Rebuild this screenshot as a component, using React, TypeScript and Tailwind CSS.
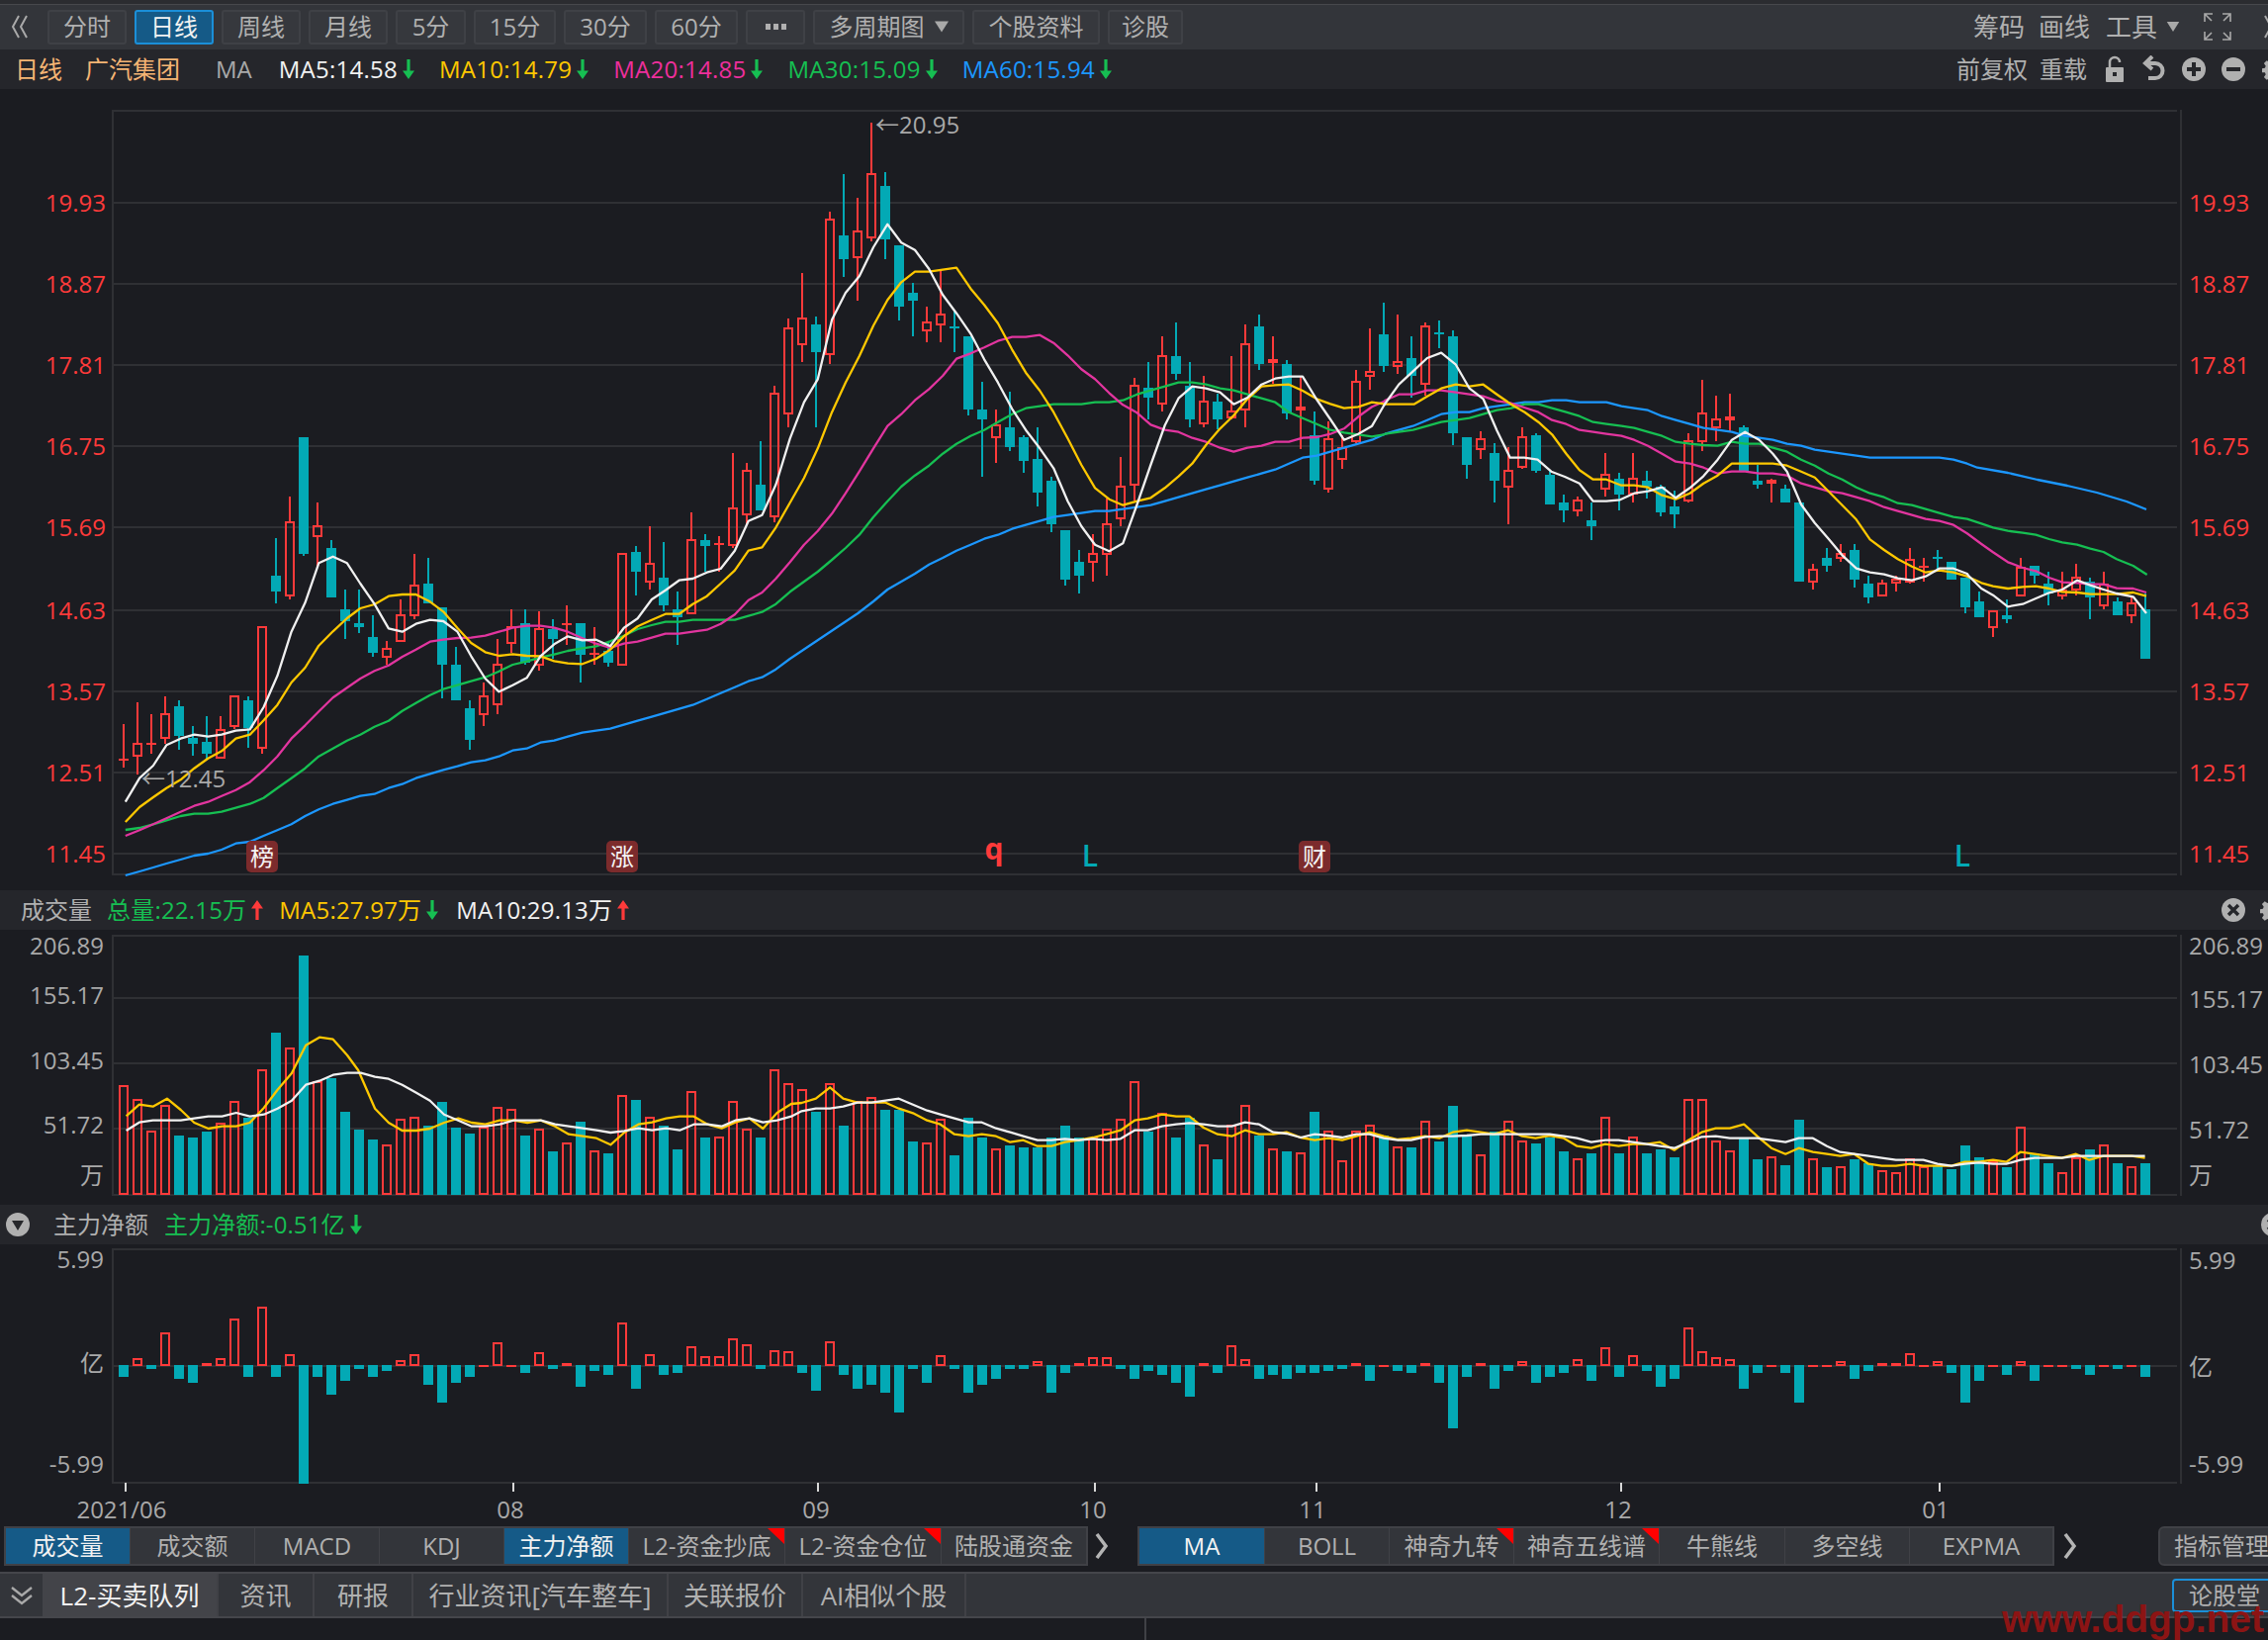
import React from "react";

type Pt = [number, number];
type Row = [number, number, number, number, number];

const RED = "#ff3a3a";
const TEAL = "#03a9b5";
const GRID = "#2f3034";
const xOf = (i: number) => 125 + 14 * i;

// readings taken from crops of the picture, mapped back by each crop's origin and scale
const conv = (ox: number, oy: number, sx: number, sy: number, pts: number[][]): Pt[] =>
  pts.map(([x, y]) => [ox + x / sx, oy + y / sy]);
const join = (...parts: Pt[][]): Pt[] => {
  const out: Pt[] = [];
  parts.forEach((part) =>
    part.forEach((p) => {
      if (!out.length || p[0] > out[out.length - 1][0]) out.push(p);
    })
  );
  return out;
};
const A = (p: number[][]) => conv(100, 400, 2.24, 3, p);
const B = (p: number[][]) => conv(700, 100, 2.24, 3, p);
const C = (p: number[][]) => conv(1300, 280, 2.24, 3, p);
const D = (p: number[][]) => conv(1960, 520, 3, 3, p);
const toPath = (pts: Pt[]) => pts.map((p) => p[0].toFixed(1) + "," + p[1].toFixed(1)).join(" ");

const candlesA: Row[] = [
  [1,996,1102,1105,1128],[1,930,1052,1096,1150],[1,966,1054,1057,1085],[1,912,962,1042,1055],[0,924,942,1032,1074],
  [0,1002,1038,1056,1092],[0,972,1050,1086,1105],[1,972,1010,1102,1102],[1,908,908,1006,1010],[0,912,924,1008,1068],
  [1,698,698,1072,1085],[0,432,546,594,630],[1,306,380,610,618],[0,126,126,480,486],[1,324,392,430,520],
  [0,438,462,612,612],[0,588,648,684,738],[0,588,690,702,720],[0,666,732,780,792],[1,744,764,796,816],
  [1,618,662,748,748],[1,480,572,670,678],[0,492,570,630,630],[0,642,642,816,918],[0,762,816,924,924],
  [0,924,948,1044,1074],[1,870,908,970,1002],[1,738,812,940,966],[1,648,700,754,780],[0,648,690,810,816],
  [1,654,704,820,834],[0,678,708,738,798],[1,636,689,692,756],[0,690,690,786,870],[1,702,779,782,816],
  [0,750,774,810,822],[1,476,476,820,820],[0,456,474,534,606],[1,396,506,568,588],[0,444,552,636,654],
  [0,594,648,672,756],[1,354,434,664,664],[0,420,438,456,534],[1,426,448,452,534],[1,174,338,456,462],
  [1,204,224,364,390],[0,138,270,348,348],
];
const candlesB: Row[] = [
  [1,870,890,1270,1284],[1,666,692,958,996],[1,528,662,748,798],[0,660,684,768,996],[1,342,362,778,804],
  [0,228,414,486,540],[1,300,398,484,612],[1,72,224,424,432],[0,222,264,426,486],[0,444,444,630,672],
  [0,558,588,612,720],[1,630,674,706,738],[1,522,650,688,738],[0,642,689,692,768],[0,720,720,942,960],
  [0,858,942,972,1146],[1,942,986,1030,1104],[0,888,996,1056,1068],[0,1020,1026,1098,1134],[0,996,1092,1194,1236],
  [0,1146,1158,1290,1314],[0,1308,1308,1458,1476],[0,1368,1404,1446,1500],[1,1320,1376,1408,1464],[1,1212,1286,1384,1446],
  [1,1086,1172,1276,1296],[1,846,866,1174,1218],[0,798,876,906,972],[1,720,776,928,948],[0,678,780,834,852],
  [0,798,870,972,996],[1,840,914,988,996],[0,894,918,972,1002],[1,780,944,970,972],[1,684,740,946,996],
  [0,654,690,804,822],[1,720,788,802,864],[0,792,804,954,972],[1,840,932,946,1062],[0,948,1020,1158,1170],
  [1,978,1030,1186,1194],[1,1020,1056,1096,1122],[1,822,854,1042,1044],[1,696,824,844,882],[0,618,714,810,828],
];
const candlesC: Row[] = [
  [1,114,254,274,294],[0,180,246,300,366],[1,138,146,328,360],[0,132,169,172,216],[0,162,180,474,510],
  [0,486,486,570,612],[1,468,488,526,552],[0,504,534,618,684],[1,516,584,640,750],[1,456,482,580,582],
  [0,474,480,588,594],[0,588,600,690,690],[0,660,684,708,744],[1,666,676,712,726],[0,684,738,756,798],
  [1,534,596,646,666],[0,594,612,660,708],[1,534,608,660,684],[0,588,618,636,672],[0,630,636,714,726],
  [0,648,696,720,762],[1,474,494,682,684],[1,312,410,502,528],[1,360,428,460,498],[1,354,422,436,470],
  [0,450,456,588,588],[0,570,618,630,642],[1,612,614,628,684],[0,630,642,684,684],[0,684,684,924,924],
  [1,870,884,928,948],[0,822,852,876,894],[1,810,836,856,864],[0,810,828,918,942],[0,906,930,972,990],
  [1,918,926,970,970],[1,906,916,930,954],[1,822,854,928,930],[1,852,876,880,924],[0,828,850,854,888],
  [0,864,864,918,918],
];
const candlesD: Row[] = [
  [0,192,192,282,300],[0,234,264,312,312],[1,290,290,346,372],[0,258,306,318,330],[1,132,158,250,250],
  [0,156,156,186,210],[0,174,210,240,276],[1,174,228,250,258],[1,150,188,232,246],[0,192,204,252,318],
  [1,174,210,280,288],[0,252,264,306,306],[1,252,266,310,330],[0,240,288,438,438],
];
const toY = (rows: Row[], base: number): Row[] =>
  rows.map(([u, h, t, b, l]) => [u, base + h / 3, base + t / 3, base + b / 3, base + l / 3]);
const candles: Row[] = [
  ...toY(candlesA, 400),
  ...toY(candlesB, 100),
  ...toY(candlesC, 280),
  ...toY(candlesD, 520),
];

const ma5 = join(
  A([[60,1232],[92,1160],[123,1122],[153,1060],[185,1040],[216,1028],[247,1034],[278,1028],[310,1016],[342,1012],[373,945],[404,850],[436,716],[467,628],[498,508],[530,488],[562,508],[592,570],[624,632],[656,706],[687,716],[718,692],[750,680],[780,684],[812,716],[843,790],[875,858],[906,898],[937,878],[969,856],[1000,790],[1031,754],[1062,730],[1095,742],[1126,740],[1158,760],[1189,704],[1220,676],[1252,618],[1283,590],[1314,560],[1345,555],[1377,536],[1408,525],[1440,470],[1471,380],[1502,362],[1533,270],[1565,130]]),
  B([[190,1150],[221,1030],[253,920],[284,850],[316,670],[347,588],[378,538],[410,450],[442,380],[473,436],[504,458],[536,516],[567,594],[598,650],[630,712],[661,790],[692,860],[724,940],[755,1004],[787,1060],[818,1120],[850,1220],[881,1296],[912,1352],[944,1372],[975,1348],[1007,1230],[1038,1110],[1070,990],[1101,908],[1132,872],[1163,878],[1195,890],[1226,926],[1257,906],[1289,866],[1320,848],[1351,842],[1382,842],[1414,912],[1445,972],[1476,1034],[1508,1016],[1539,992],[1566,930]]),
  C([[225,384],[256,326],[288,286],[320,246],[352,230],[385,266],[416,338],[447,370],[478,466],[508,548],[540,548],[570,554],[601,590],[632,606],[665,626],[696,680],[726,680],[757,676],[789,656],[820,650],[852,638],[883,670],[915,640],[946,604],[978,554],[1010,494],[1040,470],[1072,494],[1103,536],[1135,590],[1167,690],[1198,746],[1229,794],[1260,844],[1292,884],[1323,896],[1355,902],[1386,914],[1418,920],[1449,908],[1480,884],[1512,884],[1543,900]]),
  D([[90,185],[130,225],[165,245],[210,280],[255,272],[295,255],[335,238],[375,228],[420,200],[460,215],[500,228],[540,240],[590,250],[630,300]])
);
const ma10 = join(
  A([[60,1293],[92,1248],[123,1218],[153,1190],[185,1165],[216,1130],[247,1100],[278,1078],[310,1040],[342,1028],[373,985],[404,938],[436,870],[467,825],[498,758],[530,715],[562,675],[592,645],[624,633],[656,608],[687,603],[718,603],[750,625],[780,655],[812,705],[843,750],[875,778],[906,789],[937,784],[969,789],[1000,790],[1031,805],[1062,812],[1095,814],[1126,798],[1158,770],[1189,730],[1220,700],[1252,680],[1283,662],[1314,662],[1345,632],[1377,608],[1408,570],[1440,530],[1471,470],[1502,460],[1533,400],[1565,325]]),
  B([[190,1300],[221,1230],[253,1150],[284,1060],[316,950],[347,860],[378,780],[410,688],[442,610],[473,556],[504,524],[536,524],[567,518],[598,512],[630,575],[661,625],[692,680],[724,760],[755,830],[787,885],[818,950],[850,1030],[881,1110],[912,1180],[944,1214],[975,1232],[1007,1220],[1038,1210],[1070,1180],[1101,1145],[1132,1106],[1163,1050],[1195,1000],[1226,960],[1257,910],[1289,872],[1320,868],[1351,866],[1382,885],[1414,910],[1445,925],[1476,938],[1508,934],[1539,920],[1566,925]]),
  C([[225,386],[256,386],[290,386],[320,362],[352,338],[385,326],[416,332],[447,326],[478,356],[510,386],[541,410],[572,440],[603,478],[635,536],[665,586],[696,614],[726,614],[760,632],[789,632],[820,638],[852,662],[883,674],[915,656],[946,626],[978,602],[1010,566],[1040,566],[1072,566],[1103,566],[1135,572],[1167,590],[1198,608],[1229,650],[1260,692],[1292,736],[1323,796],[1355,828],[1386,856],[1418,878],[1449,896],[1480,890],[1512,896],[1543,908]]),
  D([[90,190],[130,208],[165,218],[210,225],[255,220],[295,218],[335,225],[375,235],[420,237],[460,242],[500,242],[540,242],[590,237],[630,248]])
);
const ma20 = join(
  A([[60,1335],[92,1318],[123,1300],[153,1282],[185,1262],[216,1244],[247,1232],[278,1214],[310,1196],[342,1172],[373,1136],[404,1094],[436,1040],[467,1000],[498,958],[530,916],[562,886],[592,858],[624,835],[656,818],[687,792],[718,770],[750,746],[780,740],[812,735],[843,734],[875,728],[906,716],[937,704],[969,698],[1000,698],[1031,704],[1062,716],[1095,736],[1126,752],[1158,765],[1189,752],[1220,746],[1252,734],[1283,722],[1314,722],[1345,716],[1377,710],[1408,692],[1440,664],[1471,620],[1502,597],[1533,555],[1565,505]]),
  B([[221,1412],[253,1352],[284,1310],[316,1258],[347,1196],[378,1130],[410,1060],[442,992],[473,956],[504,914],[536,880],[567,840],[598,788],[630,772],[661,754],[692,734],[724,722],[755,722],[787,716],[818,740],[850,778],[881,820],[912,850],[944,892],[975,928],[1007,952],[1038,988],[1070,1004],[1101,1010],[1132,1028],[1163,1040],[1195,1058],[1226,1070],[1257,1058],[1289,1052],[1320,1040],[1351,1040],[1382,1028],[1414,1026],[1445,1016],[1476,1000],[1508,964],[1539,934],[1566,918]]),
  C([[225,374],[256,356],[288,356],[320,344],[352,344],[385,350],[416,356],[447,362],[478,376],[508,382],[540,396],[572,410],[603,434],[635,446],[665,464],[696,470],[726,476],[760,482],[789,494],[820,512],[852,536],[883,560],[915,566],[946,578],[978,596],[1010,590],[1040,590],[1072,596],[1103,596],[1135,602],[1167,626],[1198,638],[1229,650],[1260,656],[1292,668],[1323,680],[1355,698],[1386,710],[1418,722],[1449,734],[1480,740],[1512,752],[1543,778]]),
  D([[130,90],[165,115],[210,145],[255,162],[295,172],[335,192],[375,206],[420,208],[460,212],[500,212],[540,224],[590,225],[630,237]])
);
const ma30 = join(
  A([[60,1317],[92,1311],[123,1300],[153,1288],[185,1275],[216,1268],[247,1268],[278,1262],[310,1250],[342,1238],[373,1220],[404,1190],[436,1160],[467,1130],[498,1094],[530,1070],[562,1046],[592,1028],[624,1004],[656,986],[687,956],[718,932],[750,908],[780,890],[812,878],[843,866],[875,854],[906,836],[937,816],[969,806],[1000,794],[1031,785],[1062,774],[1095,766],[1126,760],[1158,745],[1189,728],[1220,708],[1252,696],[1283,686],[1314,686],[1345,680],[1377,680],[1408,680],[1440,680],[1471,668],[1502,656],[1533,632],[1565,595]]),
  B([[253,1464],[284,1434],[316,1398],[347,1362],[378,1322],[410,1268],[442,1220],[473,1176],[504,1142],[536,1112],[567,1076],[598,1046],[630,1022],[661,1004],[692,980],[724,956],[755,938],[787,932],[818,926],[850,926],[881,926],[912,920],[944,920],[975,914],[1007,896],[1038,884],[1070,872],[1101,860],[1132,860],[1163,866],[1195,878],[1226,884],[1257,896],[1289,908],[1320,920],[1351,950],[1382,968],[1414,986],[1445,1004],[1476,1012],[1508,1018],[1539,1024],[1566,1018]]),
  C([[225,476],[256,470],[288,464],[320,452],[352,440],[385,434],[416,428],[447,416],[478,404],[510,398],[541,386],[572,386],[603,398],[635,410],[665,422],[696,440],[726,446],[760,452],[789,458],[820,470],[852,482],[883,500],[915,506],[946,510],[978,512],[1010,500],[1040,506],[1072,506],[1103,518],[1135,530],[1167,554],[1198,572],[1229,596],[1260,614],[1292,638],[1323,656],[1355,668],[1386,686],[1418,692],[1449,704],[1480,716],[1512,728],[1543,734]]),
  D([[130,28],[165,40],[210,50],[255,56],[295,62],[335,75],[375,85],[420,92],[460,104],[500,114],[540,136],[590,156],[632,183]])
);
const ma60 = join(
  A([[60,1455],[92,1443],[123,1431],[153,1419],[185,1407],[216,1395],[247,1389],[278,1377],[310,1358],[342,1353],[373,1335],[404,1318],[436,1300],[467,1275],[498,1255],[530,1238],[562,1226],[592,1214],[624,1208],[656,1190],[687,1178],[718,1160],[750,1147],[780,1135],[812,1124],[843,1112],[875,1106],[906,1094],[937,1076],[969,1070],[1000,1052],[1031,1046],[1062,1034],[1095,1022],[1126,1016],[1158,1010],[1189,998],[1220,986],[1252,974],[1283,962],[1314,950],[1345,938],[1377,920],[1408,902],[1440,884],[1471,866],[1502,854],[1533,830],[1565,798]]),
  B([[375,1560],[410,1524],[442,1488],[473,1464],[504,1440],[536,1412],[567,1392],[598,1370],[630,1352],[661,1334],[692,1322],[724,1304],[755,1292],[787,1280],[818,1268],[850,1262],[881,1256],[912,1250],[944,1250],[975,1244],[1007,1238],[1038,1232],[1070,1220],[1101,1208],[1132,1196],[1163,1184],[1195,1172],[1226,1160],[1257,1148],[1289,1136],[1320,1124],[1351,1106],[1382,1088],[1414,1082],[1445,1070],[1476,1058],[1508,1046],[1539,1034],[1566,1018]]),
  C([[225,476],[256,464],[288,452],[320,434],[352,416],[385,410],[416,410],[447,398],[478,392],[510,386],[541,380],[572,380],[603,374],[635,374],[665,380],[696,380],[726,380],[760,392],[789,398],[820,404],[852,422],[883,434],[915,446],[946,458],[978,464],[1010,470],[1040,482],[1072,488],[1103,494],[1135,506],[1167,512],[1198,524],[1229,530],[1260,536],[1292,542],[1323,548],[1355,548],[1386,548],[1418,548],[1449,548],[1480,548],[1512,554],[1543,566],[1566,578]]),
  [[2030,478],[2060,485],[2090,491],[2120,498],[2150,507],[2170,515]]
);

// signed bar tops: positive is a red bar, negative a teal one
const volA = [650,692,788,710,-804,-810,-792,764,698,-750,602,-492,536,-258,638,-630,-732,-786,-816,830,752,746,-774,-702,-780,-798,776,716,722,-804,782,-852,824,-762,848,-858,680,-696,746,-774,-846,668,-810,806,698,782,-810,602];
const volB = [104,122,-192,104,-234,158,146,-186,-186,-282,284,212,-324,-210,-270,302,-294,-300,-300,-270,-234,-270,270,242,212,98,-252,194,-270,-210,290,-336,230,170,-264,302,-312,314,-192,248,338,248,230,-264,296,-300,218,-282,-174,-264,320,-252,218,278,-288,-270,-312,332,-318,206,-318,266,-318,-306,-330,152,152,278,308,-270,-336,326,-354,-216,332,-360,356,-336,-348,368,374,332,356,-354,-366,-294,-330,342,-360,236,-318,-348,374,330,-306,290,-348,356,-348];
const volBars = [...volA.map((v) => Math.sign(v) * (880 + Math.abs(v) / 3)), ...volB.map((v) => Math.sign(v) * (1060 + Math.abs(v) / 3))];

const E = (p: number[][]) => conv(0, 880, 1.96, 3, p);
const F = (p: number[][]) => conv(790, 1060, 1.12, 3, p);
const volMa5 = join(
  E([[250,745],[276,710],[303,716],[331,692],[358,726],[385,765],[413,783],[440,776],[468,776],[495,765],[523,720],[550,665],[578,615],[606,530],[633,506],[660,512],[688,560],[710,606],[743,722],[770,765],[797,789],[825,789],[852,783],[880,765],[908,752],[935,765],[962,770],[990,758],[1018,758],[1045,765],[1072,758],[1100,776],[1127,800],[1155,806],[1182,812],[1210,832],[1237,795],[1265,770],[1292,764],[1320,752],[1347,746],[1375,746],[1402,770],[1430,782],[1457,764],[1485,752],[1512,783],[1540,735],[1568,708]]),
  F([[23,165],[39,152],[55,118],[70,152],[86,164],[102,164],[118,164],[133,182],[149,196],[165,218],[180,230],[196,260],[212,266],[227,260],[243,266],[259,284],[274,278],[290,296],[306,296],[321,284],[337,278],[353,270],[368,260],[384,248],[400,218],[415,212],[431,200],[447,206],[462,206],[478,240],[494,260],[510,266],[525,248],[541,260],[557,260],[572,254],[588,270],[604,278],[619,272],[635,278],[651,266],[666,254],[682,266],[698,276],[713,272],[729,266],[745,272],[760,254],[776,248],[792,254],[807,260],[823,248],[839,266],[854,272],[870,264],[886,272],[901,296],[917,302],[933,290],[948,296],[964,290],[980,290],[995,284],[1011,308],[1027,278],[1042,254],[1058,242],[1074,242],[1090,230],[1105,266],[1121,302],[1137,320],[1152,302],[1168,314],[1184,320],[1199,326],[1215,320],[1231,350],[1246,356],[1262,356],[1278,350],[1293,356],[1309,356],[1325,356],[1340,344],[1356,344],[1372,338],[1387,344],[1403,314],[1419,320],[1434,326],[1450,332],[1466,320],[1481,338],[1497,326],[1513,326],[1529,326],[1544,332]])
);
const volMa10 = join(
  E([[250,789],[276,764],[303,758],[331,758],[358,758],[385,752],[413,746],[440,746],[468,735],[495,746],[523,740],[550,722],[578,698],[606,650],[633,638],[660,620],[688,614],[715,614],[743,626],[770,632],[797,650],[825,674],[852,698],[880,740],[908,758],[935,776],[962,776],[990,770],[1018,758],[1045,758],[1072,758],[1100,770],[1127,776],[1155,782],[1182,788],[1210,795],[1237,790],[1265,782],[1292,788],[1320,782],[1347,788],[1375,770],[1402,770],[1430,776],[1457,758],[1485,752],[1512,764],[1540,758],[1568,746]]),
  F([[23,190],[39,182],[55,182],[70,176],[86,164],[102,164],[118,158],[133,152],[149,170],[165,188],[180,200],[196,212],[212,224],[227,224],[243,242],[259,254],[274,266],[290,278],[306,278],[321,274],[337,278],[353,274],[368,278],[384,274],[400,248],[415,248],[431,236],[447,230],[462,226],[478,230],[494,236],[510,236],[525,224],[541,230],[557,254],[572,258],[588,270],[604,260],[619,264],[635,270],[651,260],[666,260],[682,272],[698,278],[713,278],[729,268],[745,266],[760,266],[776,264],[792,260],[807,260],[823,260],[839,260],[854,260],[870,260],[886,266],[901,272],[917,284],[933,278],[948,278],[964,284],[980,290],[995,296],[1011,302],[1027,284],[1042,268],[1058,266],[1074,272],[1090,272],[1105,272],[1121,278],[1137,284],[1152,272],[1168,272],[1184,296],[1199,314],[1215,320],[1231,326],[1246,332],[1262,338],[1278,338],[1293,338],[1309,350],[1325,356],[1340,350],[1356,346],[1372,350],[1387,350],[1403,338],[1419,332],[1434,332],[1450,332],[1466,326],[1481,326],[1497,326],[1513,326],[1529,326],[1544,326]])
);

const netA = [-516,458,-492,380,-522,-534,474,458,338,-516,302,-516,446,-840,-516,-570,-528,-492,-516,-498,464,446,-540,-594,-534,-516,481,410,481,-504,440,-492,474,-546,-498,-510,350,-552,446,-510,-504,422,452,452,398,416,-492,434];
const netB = [918,-984,-1038,888,-990,-1032,-1020,-1044,-1104,-972,-1014,930,-972,-1044,-1020,-1002,-972,-972,948,-1044,-984,954,936,936,-972,-1002,-978,-990,-1014,-1056,954,-984,900,942,-1002,-990,-1002,-984,-984,-978,-972,954,-1008,960,-978,-984,954,-1014,-1152,-996,954,-1032,-978,948,-1014,-996,-984,942,-1008,906,-996,930,-978,-1026,-1002,846,918,936,942,-1032,-984,960,-984,-1074,960,960,948,-1002,-978,954,954,924,960,948,-984,-1074,-1008,960,-990,948,-1008,960,960,-972,-990,960,-972,960,-996];
const netBars = [...netA.map((v) => Math.sign(v) * (1220 + Math.abs(v) / 3)), ...netB.map((v) => Math.sign(v) * (1060 + Math.abs(v) / 3))];

const Hollow = ({ x, top, bottom }: { x: number; top: number; bottom: number }) =>
  bottom - top <= 3 ? (
    <rect x={x - 5} y={top} width={10} height={Math.max(bottom - top, 2)} fill={RED} />
  ) : (
    <rect x={x - 4} y={top + 1} width={8} height={bottom - top - 2} fill="none" stroke={RED} strokeWidth={2} />
  );

const Candle = ({ i, row }: { i: number; row: Row }) => {
  const [up, h, t, b, l] = row;
  const x = xOf(i);
  if (up) {
    return (
      <g>
        <rect x={x - 1} y={h} width={2} height={Math.max(t - h, 0)} fill={RED} />
        <rect x={x - 1} y={b} width={2} height={Math.max(l - b, 0)} fill={RED} />
        <Hollow x={x} top={t} bottom={b} />
      </g>
    );
  }
  return (
    <g>
      <rect x={x - 1} y={h} width={2} height={l - h} fill={TEAL} />
      <rect x={x - 5} y={t} width={10} height={Math.max(b - t, 2)} fill={TEAL} />
    </g>
  );
};

const Line = ({ pts, color, w = 2.3 }: { pts: Pt[]; color: string; w?: number }) => (
  <polyline points={toPath(pts)} fill="none" stroke={color} strokeWidth={w} strokeLinejoin="round" />
);

const HLine = ({ y, x2 = 2201 }: { y: number; x2?: number }) => <rect x={113} y={y - 1} width={x2 - 113} height={2} fill={GRID} />;
const VLine = ({ x, y1, y2 }: { x: number; y1: number; y2: number }) => <rect x={x - 1} y={y1} width={2} height={y2 - y1} fill={GRID} />;

const Marker = ({ x, label }: { x: number; label: string }) => (
  <g>
    <rect x={x - 16} y={850} width={32} height={32} rx={5} fill="#7c2b2c" />
    <text x={x} y={865} textAnchor="middle" dominantBaseline="central" fontSize={24} fill="#f5f5f5">
      {label}
    </text>
  </g>
);

const priceTicks: [string, number][] = [["19.93",205],["18.87",287],["17.81",369],["16.75",451],["15.69",533],["14.63",617],["13.57",699],["12.51",781],["11.45",863]];

const PriceChart = () => (
  <svg viewBox="0 90 2293 810" className="block w-[2293px] h-[810px]">
    <g shapeRendering="crispEdges">
      <HLine y={112} />
      {priceTicks.map(([, y]) => <HLine key={y} y={y} />)}
      <HLine y={884} />
      <VLine x={114} y1={111} y2={885} />
      <VLine x={2205} y1={111} y2={885} />
      {candles.map((row, i) => <Candle key={i} i={i} row={row} />)}
    </g>
    <Line pts={ma60} color="#1c97ff" />
    <Line pts={ma30} color="#16bf52" />
    <Line pts={ma20} color="#e2359f" />
    <Line pts={ma10} color="#ffc800" />
    <Line pts={ma5} color="#f0f0f0" />
    {priceTicks.map(([t, y]) => (
      <g key={t} fontSize={24} fill={RED} dominantBaseline="central">
        <text x={107} y={y - 1} textAnchor="end">{t}</text>
        <text x={2213} y={y - 1}>{t}</text>
      </g>
    ))}
    <text x={885} y={125} fontSize={24} fill="#a9a9a9" dominantBaseline="central">←20.95</text>
    <text x={143} y={786} fontSize={24} fill="#a9a9a9" dominantBaseline="central">←12.45</text>
    <Marker x={265} label="榜" />
    <Marker x={629} label="涨" />
    <Marker x={1329} label="财" />
    <text x={1005} y={857} fontSize={30} fontWeight={700} fill={RED} textAnchor="middle" dominantBaseline="central">q</text>
    <text x={1102} y={864} fontSize={30} fontWeight={600} fill={TEAL} textAnchor="middle" dominantBaseline="central">L</text>
    <text x={1984} y={864} fontSize={30} fontWeight={600} fill={TEAL} textAnchor="middle" dominantBaseline="central">L</text>
  </svg>
);

const VolumeChart = () => (
  <svg viewBox="0 940 2293 278" className="block w-[2293px] h-[278px]">
    <g shapeRendering="crispEdges">
      <HLine y={946} />
      <HLine y={1009} />
      <HLine y={1075} />
      <HLine y={1141} />
      <HLine y={1208} />
      <VLine x={114} y1={945} y2={1209} />
      <VLine x={2205} y1={945} y2={1209} />
      {volBars.map((v, i) =>
        v > 0 ? <Hollow key={i} x={xOf(i)} top={v} bottom={1208} /> : <rect key={i} x={xOf(i) - 5} y={-v} width={10} height={1208 + v} fill={TEAL} />
      )}
    </g>
    <Line pts={volMa5} color="#ffc800" />
    <Line pts={volMa10} color="#f0f0f0" />
    <g fontSize={24} fill="#a9a9a9" dominantBaseline="central">
      <text x={105} y={955} textAnchor="end">206.89</text>
      <text x={105} y={1005} textAnchor="end">155.17</text>
      <text x={105} y={1071} textAnchor="end">103.45</text>
      <text x={105} y={1136} textAnchor="end">51.72</text>
      <text x={105} y={1187} textAnchor="end">万</text>
      <text x={2213} y={955}>206.89</text>
      <text x={2213} y={1009}>155.17</text>
      <text x={2213} y={1075}>103.45</text>
      <text x={2213} y={1141}>51.72</text>
      <text x={2213} y={1187}>万</text>
    </g>
  </svg>
);

const NetChart = () => (
  <svg viewBox="0 1258 2293 285" className="block w-[2293px] h-[285px]">
    <g shapeRendering="crispEdges">
      <HLine y={1263} />
      <HLine y={1381} />
      <HLine y={1499} />
      <VLine x={114} y1={1262} y2={1500} />
      <VLine x={2205} y1={1262} y2={1500} />
      {netBars.map((v, i) =>
        v > 0 ? <Hollow key={i} x={xOf(i)} top={v} bottom={1381} /> : <rect key={i} x={xOf(i) - 5} y={1380} width={10} height={-v - 1380} fill={TEAL} />
      )}
      {[127, 519, 827, 1107, 1331, 1639, 1961].map((x) => <rect key={x} x={x - 1} y={1499} width={2} height={9} fill="#d8d8d8" />)}
    </g>
    <g fontSize={24} fill="#a9a9a9" dominantBaseline="central">
      <text x={105} y={1272} textAnchor="end">5.99</text>
      <text x={105} y={1377} textAnchor="end">亿</text>
      <text x={105} y={1479} textAnchor="end">-5.99</text>
      <text x={2213} y={1273}>5.99</text>
      <text x={2213} y={1381}>亿</text>
      <text x={2213} y={1479}>-5.99</text>
      <text x={123} y={1525} textAnchor="middle">2021/06</text>
      <text x={516} y={1525} textAnchor="middle">08</text>
      <text x={825} y={1525} textAnchor="middle">09</text>
      <text x={1105} y={1525} textAnchor="middle">10</text>
      <text x={1327} y={1525} textAnchor="middle">11</text>
      <text x={1636} y={1525} textAnchor="middle">12</text>
      <text x={1957} y={1525} textAnchor="middle">01</text>
    </g>
  </svg>
);

const Arrow = ({ up, color }: { up?: boolean; color: string }) => (
  <svg viewBox="0 0 12 20" className={up ? "w-[12px] h-[20px] rotate-180" : "w-[12px] h-[20px]"} fill={color}>
    <path d="M4.4 0h3.2v11.5H12L6 20 0 11.5h4.4z" />
  </svg>
);

const Chevrons = ({ dir }: { dir: "left" | "right" }) => (
  <svg viewBox="0 0 20 24" className="w-[20px] h-[24px] shrink-0" fill="none" stroke="#a9a9a9" strokeWidth={2}>
    <path d={dir === "left" ? "M9 1 3 12l6 11M17 1l-6 11 6 11" : "M3 1l6 11-6 11M11 1l6 11-6 11"} />
  </svg>
);

const Chevron = () => (
  <svg viewBox="0 0 14 26" className="w-[14px] h-[26px] shrink-0" fill="none" stroke="#b4b4b4" strokeWidth={3.5}>
    <path d="M2 1l9 12-9 12" />
  </svg>
);

const Tri = ({ className }: { className: string }) => (
  <svg viewBox="0 0 10 8" className={className} fill="#a9a9a9">
    <path d="M0 0h10L5 8z" />
  </svg>
);

const Circle = ({ kind }: { kind: "plus" | "minus" | "close" | "drop" }) => (
  <svg viewBox="0 0 24 24" className="w-[24px] h-[24px] shrink-0">
    <circle cx={12} cy={12} r={12} fill="#b0b0b0" />
    {kind === "plus" && <path d="M10 5h4v5h5v4h-5v5h-4v-5H5v-4h5z" fill="#26272b" />}
    {kind === "minus" && <rect x={5} y={10} width={14} height={4} fill="#26272b" />}
    {kind === "close" && <path d="M7 7l10 10M17 7 7 17" stroke="#26272b" strokeWidth={3.4} />}
    {kind === "drop" && <path d="M6 8h12l-6 10z" fill="#26272b" />}
  </svg>
);

const Gear = () => (
  <svg viewBox="0 0 24 24" className="w-[24px] h-[24px] shrink-0" fill="#b0b0b0">
    <path d="M10 1h4l.6 3.2 2 .8 2.7-1.8 2.8 2.8L19.3 8.700l.8 2 3.200.6v4l-3.200.6-.8 2 1.800 2.700-2.800 2.800-2.700-1.800-2 .8L14 25h-4l-.6-3.200-2-.8-2.700 1.800-2.800-2.800 1.800-2.700-.8-2L-.3 15.300v-4l3.200-.6.800-2L1.900 6l2.800-2.800L7.400 5l2-.8z" />
    <circle cx={12} cy={13} r={4} fill="#26272b" />
  </svg>
);

const Lock = () => (
  <svg viewBox="0 0 20 28" className="w-[20px] h-[28px] shrink-0">
    <path d="M5 12V7a5 5 0 0 1 10 0" fill="none" stroke="#b0b0b0" strokeWidth={2.5} />
    <rect x={1} y={12} width={18} height={15} rx={1} fill="#b0b0b0" />
    <rect x={8} y={17} width={4} height={4} fill="#26272b" />
  </svg>
);

const Undo = () => (
  <svg viewBox="0 0 24 28" className="w-[24px] h-[28px] shrink-0" fill="none" stroke="#b0b0b0" strokeWidth={4}>
    <path d="M4 8h9a7.500 7.500 0 0 1 0 15H6" />
    <path d="M10 1 3 8l7 6" fill="none" />
  </svg>
);

const FullScreen = () => (
  <svg viewBox="0 0 28 28" className="w-[28px] h-[28px] shrink-0" fill="none" stroke="#a9a9a9" strokeWidth={1.6}>
    <path d="M1 9V1h8M1 1l7 7M19 1h8v8M27 1l-7 7M1 19v8h8M1 27l7-7M19 27h8v-8M27 27l-7-7" />
  </svg>
);

const periodBtns = [
  { t: "分时", w: "w-[80px]" }, { t: "日线", w: "w-[80px]", on: true }, { t: "周线", w: "w-[80px]" }, { t: "月线", w: "w-[80px]" },
  { t: "5分", w: "w-[71px]" }, { t: "15分", w: "w-[83px]" }, { t: "30分", w: "w-[84px]" }, { t: "60分", w: "w-[84px]" },
];

const Btn = ({ children, w, on }: { children: React.ReactNode; w: string; on?: boolean }) => (
  <div
    className={`${w} h-[35px] flex items-center justify-center rounded-[3px] border-2 shrink-0 ${
      on ? "bg-[#155a87] border-[#1b8fd8] text-[#f2f2f2]" : "bg-[#36383d] border-[#3f4146] text-[#b0b0b0]"
    }`}
  >
    {children}
  </div>
);

const Toolbar = () => (
  <div className="h-[45px] bg-[#33353a] flex items-center pl-[10px] pb-[1px]">
    <div className="w-[38px] shrink-0"><Chevrons dir="left" /></div>
    <div className="flex items-center gap-[8px]">
      {periodBtns.map((b) => (
        <Btn key={b.t} w={b.w} on={b.on}>{b.t}</Btn>
      ))}
      <Btn w="w-[60px]">
        <span className="flex gap-[3px]">
          <i className="block w-[5px] h-[6px] bg-[#b0b0b0]" />
          <i className="block w-[5px] h-[6px] bg-[#b0b0b0]" />
          <i className="block w-[5px] h-[6px] bg-[#b0b0b0]" />
        </span>
      </Btn>
      <Btn w="w-[153px]">
        <span>多周期图</span>
        <Tri className="w-[14px] h-[12px] ml-[10px]" />
      </Btn>
      <Btn w="w-[129px]">个股资料</Btn>
      <Btn w="w-[76px]">诊股</Btn>
    </div>
    <div className="ml-auto flex items-center text-[26px] text-[#b0b0b0] -mr-[14px] shrink-0">
      <span>筹码</span>
      <span className="ml-[14px]">画线</span>
      <span className="ml-[16px]">工具</span>
      <Tri className="w-[14px] h-[10px] ml-[9px]" />
      <div className="ml-[24px]"><FullScreen /></div>
      <div className="ml-[31px]"><Chevrons dir="right" /></div>
    </div>
  </div>
);

const QuoteRow = () => (
  <div className="h-[40px] bg-[#25262b] flex items-center pl-[15px]">
    <span className="text-[#f5b574]">日线</span>
    <span className="text-[#f5b574] ml-[23px]">广汽集团</span>
    <span className="text-[#a9a9a9] ml-[36px]">MA</span>
    <span className="text-[#f2f2f2] ml-[27px] flex items-center gap-[5px] tracking-[0.25px]">MA5:14.58<Arrow color="#16bf52" /></span>
    <span className="text-[#ffc800] ml-[25px] flex items-center gap-[5px] tracking-[0.25px]">MA10:14.79<Arrow color="#16bf52" /></span>
    <span className="text-[#ee2f9c] ml-[25px] flex items-center gap-[5px] tracking-[0.25px]">MA20:14.85<Arrow color="#16bf52" /></span>
    <span className="text-[#16bf52] ml-[25px] flex items-center gap-[5px] tracking-[0.25px]">MA30:15.09<Arrow color="#16bf52" /></span>
    <span className="text-[#1c97ff] ml-[25px] flex items-center gap-[5px] tracking-[0.25px]">MA60:15.94<Arrow color="#16bf52" /></span>
    <div className="ml-auto flex items-center text-[#b0b0b0] -mr-[18px] shrink-0">
      <span>前复权</span>
      <span className="ml-[12px]">重载</span>
      <div className="ml-[18px]"><Lock /></div>
      <div className="ml-[18px]"><Undo /></div>
      <div className="ml-[16px]"><Circle kind="plus" /></div>
      <div className="ml-[16px]"><Circle kind="minus" /></div>
      <div className="ml-[17px]"><Gear /></div>
    </div>
  </div>
);

const VolumeHeader = () => (
  <div className="h-[40px] bg-[#25262b] flex items-center pl-[21px]">
    <span className="text-[#b0b0b0]">成交量</span>
    <span className="text-[#16bf52] ml-[15px] flex items-center gap-[5px] tracking-[0.2px]">总量:22.15万<Arrow up color={RED} /></span>
    <span className="text-[#ffc800] ml-[16px] flex items-center gap-[5px] tracking-[0.2px]">MA5:27.97万<Arrow color="#16bf52" /></span>
    <span className="text-[#f2f2f2] ml-[18px] flex items-center gap-[5px] tracking-[0.2px]">MA10:29.13万<Arrow up color={RED} /></span>
    <div className="ml-auto flex items-center -mr-[16px] shrink-0">
      <Circle kind="close" />
      <div className="ml-[15px]"><Gear /></div>
    </div>
  </div>
);

const NetHeader = () => (
  <div className="h-[40px] bg-[#25262b] flex items-center pl-[6px]">
    <Circle kind="drop" />
    <span className="text-[#b0b0b0] ml-[24px]">主力净额</span>
    <span className="text-[#16bf52] ml-[16px] flex items-center gap-[5px] tracking-[0.1px]">主力净额:-0.51亿<Arrow color="#16bf52" /></span>
    <div className="ml-auto -mr-[17px] shrink-0"><Circle kind="close" /></div>
  </div>
);

const Flag = () => (
  <svg viewBox="0 0 17 16" className="absolute top-0 right-0 w-[17px] h-[16px]" fill="#ff0000">
    <path d="M0 0h17v16z" />
  </svg>
);

const leftTabs = [
  { t: "成交量", w: "w-[125px]", on: true }, { t: "成交额", w: "w-[125px]" }, { t: "MACD", w: "w-[125px]" }, { t: "KDJ", w: "w-[125px]" },
  { t: "主力净额", w: "w-[125px]", on: true }, { t: "L2-资金抄底", w: "w-[157px]", flag: true }, { t: "L2-资金仓位", w: "w-[157px]", flag: true }, { t: "陆股通资金", w: "w-[146px]" },
];
const rightTabs = [
  { t: "MA", w: "w-[126px]", on: true }, { t: "BOLL", w: "w-[125px]" }, { t: "神奇九转", w: "w-[125px]", flag: true }, { t: "神奇五线谱", w: "w-[146px]", flag: true },
  { t: "牛熊线", w: "w-[126px]" }, { t: "多空线", w: "w-[125px]" }, { t: "EXPMA", w: "w-[144px]" },
];

const TabGroup = ({ tabs }: { tabs: { t: string; w: string; on?: boolean; flag?: boolean }[] }) => (
  <div className="flex gap-px bg-[#404146] p-[2px] shrink-0">
    {tabs.map((tab) => (
      <div
        key={tab.t}
        className={`${tab.w} h-[36px] relative flex items-center justify-center whitespace-nowrap ${tab.on ? "bg-[#155a87] text-[#f2f2f2]" : "bg-[#33353a] text-[#b0b0b0]"}`}
      >
        {tab.t}
        {tab.flag && <Flag />}
      </div>
    ))}
  </div>
);

const IndicatorTabs = () => (
  <div className="h-[46px] flex items-start pl-[4px]">
    <TabGroup tabs={leftTabs} />
    <div className="ml-[7px] mt-[7px]"><Chevron /></div>
    <div className="ml-[29px]"><TabGroup tabs={rightTabs} /></div>
    <div className="ml-[9px] mt-[7px]"><Chevron /></div>
    <div className="ml-[82px] w-[130px] h-[40px] shrink-0 bg-[#33353a] border-2 border-[#404146] rounded-l-[6px] flex items-center pl-[14px] whitespace-nowrap text-[#b0b0b0]">
      指标管理
    </div>
  </div>
);

const infoTabs = [
  { t: "L2-买卖队列", w: "w-[178px]", on: true }, { t: "资讯", w: "w-[97px]" }, { t: "研报", w: "w-[100px]" },
  { t: "行业资讯[汽车整车]", w: "w-[258px]" }, { t: "关联报价", w: "w-[136px]" }, { t: "AI相似个股", w: "w-[165px]" },
];

const InfoTabs = () => (
  <div className="h-[47px] bg-[#33353a] border-y-2 border-[#45464b] flex items-stretch">
    <div className="w-[43px] flex items-center justify-center shrink-0">
      <svg viewBox="0 0 24 24" className="w-[24px] h-[24px]" fill="none" stroke="#a9a9a9" strokeWidth={2.4}>
        <path d="M2 4l10 8 10-8M2 12l10 8 10-8" />
      </svg>
    </div>
    {infoTabs.map((tab) => (
      <div
        key={tab.t}
        className={`${tab.w} flex items-center justify-center border-r-2 border-[#404146] whitespace-nowrap shrink-0 text-[26px] ${tab.on ? "bg-[#434449] text-[#f2f2f2]" : "text-[#b0b0b0]"}`}
      >
        {tab.t}
      </div>
    ))}
    <div className="ml-auto w-[110px] h-[34px] self-center shrink-0 -mr-[13px] rounded-[4px] border-2 border-[#1b8fd8] flex items-center pl-[15px] text-[#b0b0b0] whitespace-nowrap">
      论股堂
    </div>
  </div>
);

export default function App() {
  return (
    <div className="relative w-[2293px] h-[1658px] overflow-hidden bg-[#1b1c21] text-[24px] leading-none font-['Open_Sans','Noto_Sans_CJK_SC',sans-serif]">
      <div className="h-[5px] bg-[#2b2c30] border-b border-[#47484c]" />
      <Toolbar />
      <QuoteRow />
      <PriceChart />
      <VolumeHeader />
      <VolumeChart />
      <NetHeader />
      <NetChart />
      <IndicatorTabs />
      <InfoTabs />
      <div className="flex h-[22px]">
        <div className="ml-[1157px] w-[2px] bg-[#404146]" />
      </div>
      <div className="absolute left-[2024px] top-[1617px] text-[39px] font-bold whitespace-nowrap text-[#8c1414] font-['Liberation_Sans',sans-serif]">
        www.ddgp.net
      </div>
    </div>
  );
}
